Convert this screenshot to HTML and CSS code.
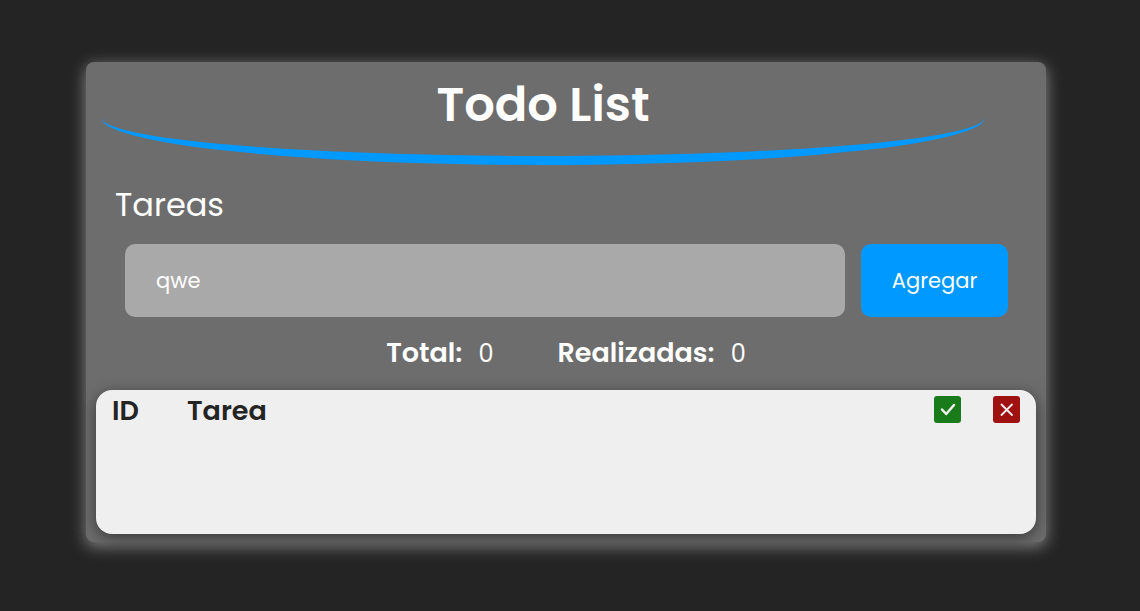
FILE: index.html
```html
<!DOCTYPE html>
<html lang="es">
<head>
<meta charset="utf-8">
<meta name="viewport" content="width=device-width, initial-scale=1">
<title>Todo List</title>
<link rel="stylesheet" href="styles.css">
</head>
<body>
<main class="card">
  <h1 class="title">Todo List</h1>
  <form class="task-form">
    <label class="task-label" for="task">Tareas</label>
    <div class="task-row">
      <input class="task-input" id="task" type="text" value="qwe">
      <button class="task-submit" type="button">Agregar</button>
    </div>
  </form>
  <dl class="stats">
    <div class="stat"><dt>Total:</dt><dd>0</dd></div>
    <div class="stat"><dt>Realizadas:</dt><dd>0</dd></div>
  </dl>
  <section class="panel">
    <table class="tasks">
      <thead>
        <tr>
          <th class="col-id" scope="col">ID</th>
          <th scope="col">Tarea</th>
          <th class="col-icon" scope="col">
            <svg class="icon" viewBox="0 0 27 27" role="img" aria-label="Realizada">
              <rect width="27" height="27" rx="3" fill="#197b19"/>
              <path d="M8 13.5l4.2 4.5L20 9" fill="none" stroke="#f0f0f0" stroke-width="2.5" stroke-linecap="round" stroke-linejoin="round"/>
            </svg>
          </th>
          <th class="col-icon" scope="col">
            <svg class="icon" viewBox="0 0 27 27" role="img" aria-label="Eliminar">
              <rect width="27" height="27" rx="3" fill="#a01212"/>
              <path d="M8.5 8.5l10.5 10.5M19 8.5L8.5 19" fill="none" stroke="#f0f0f0" stroke-width="1.8" stroke-linecap="round"/>
            </svg>
          </th>
        </tr>
      </thead>
    </table>
  </section>
</main>
</body>
</html>
```
FILE: styles.css
```css
* {
  box-sizing: border-box;
  margin: 0;
  padding: 0;
}

body {
  min-height: 100vh;
  padding: 62px 94px 64px 86px;
  background: #242424;
  color: #fff;
  font-family: Poppins, Inter, sans-serif;
}

.card {
  display: flex;
  flex-direction: column;
  max-width: 1200px;
  margin: 0 auto;
  padding: 8px 10px;
  border-radius: 8px;
  background: #6d6d6d;
  box-shadow: 0 4px 16px #8c8c8c;
}

.title {
  margin: 0 51px 0 5px;
  padding: 5px 0 21px;
  border-bottom: 9px solid #0099ff;
  border-radius: 50%;
  font-size: 48px;
  font-weight: 600;
  line-height: 60px;
  text-align: center;
}

.task-form {
  padding: 20px 28px 0 19px;
}

.task-label {
  display: block;
  font-size: 32px;
  line-height: 40px;
}

.task-row {
  display: flex;
  gap: 16px;
  padding: 19px 0 0 10px;
}

.task-input,
.task-submit {
  height: 73px;
  border: 0;
  border-radius: 10px;
  color: #fff;
  font-family: inherit;
  font-size: 21px;
}

.task-input {
  flex: 1;
  min-width: 0;
  padding: 0 31px;
  background: #a9a9a9;
}

.task-submit {
  flex: 0 0 147px;
  background: #0099ff;
}

.stats {
  display: flex;
  justify-content: center;
  gap: 64px;
  height: 73px;
  padding-top: 16px;
  font-size: 27px;
  line-height: 40px;
}

.stat {
  display: flex;
  align-items: baseline;
  gap: 16px;
}

.stat dt {
  font-weight: 600;
}

.stat dd {
  font-size: 24px;
}

.panel {
  min-height: 144px;
  padding: 0 16px;
  border-radius: 16px;
  background: #efefef;
  color: #242424;
  box-shadow: 0 4px 16px rgba(0, 0, 0, 0.5);
}

.tasks {
  width: 100%;
  border-collapse: collapse;
  table-layout: fixed;
}

.tasks th {
  font-size: 27px;
  font-weight: 600;
  line-height: 42px;
  text-align: left;
}

.tasks .col-id {
  width: 75px;
}

.tasks .col-icon {
  width: 59px;
  padding-top: 6px;
  vertical-align: top;
}

.icon {
  display: block;
  width: 27px;
  height: 27px;
  margin-left: auto;
}
```
